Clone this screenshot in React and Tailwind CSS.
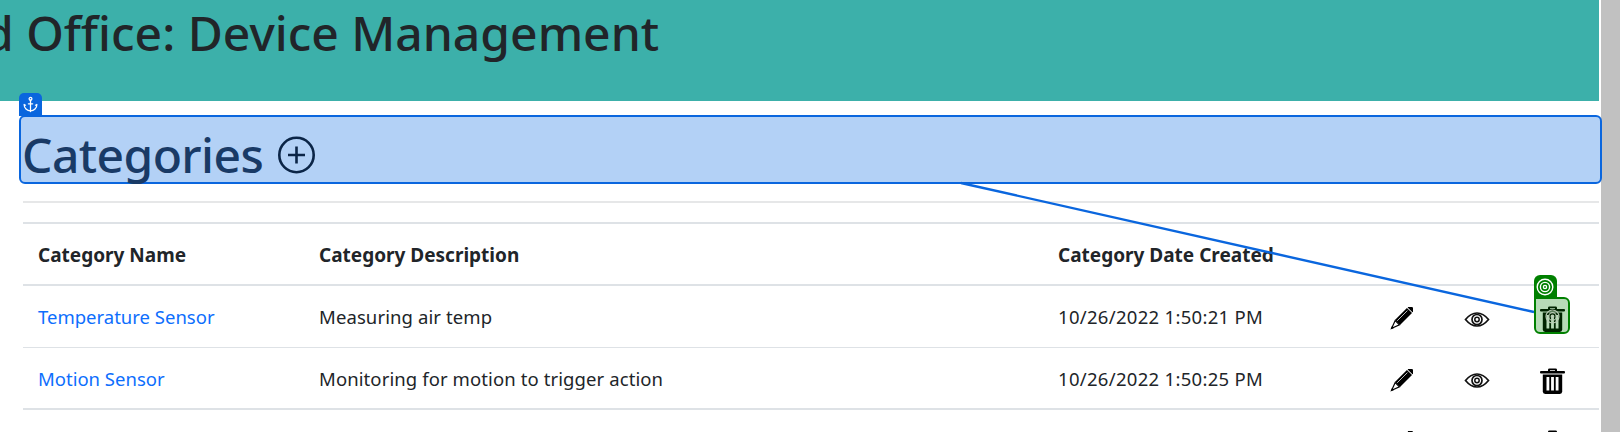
import React from "react";
import { Anchor } from "lucide-react";

const font = "font-['Noto_Sans','Open_Sans',sans-serif]";

const rows = [
  { name: "Temperature Sensor", desc: "Measuring air temp", date: "10/26/2022 1:50:21 PM", linked: true },
  { name: "Motion Sensor", desc: "Monitoring for motion to trigger action", date: "10/26/2022 1:50:25 PM", thick: true },
  { name: "", desc: "", date: "" },
];

function PencilIcon() {
  return (
    <svg width="24" height="24" viewBox="0 0 24 24" fill="#000">
      <g transform="rotate(45 12 12)">
        <rect x="8.4" y="-4.4" width="7.2" height="3.6" rx="0.9" />
        <rect x="8.4" y="0" width="7.2" height="17" />
        <path d="M10.6 1.5v14.5" stroke="#fff" strokeWidth="0.7" />
        <path d="M9 17.2h6l-3 8z" fill="#fff" stroke="#000" strokeWidth="1.2" />
        <path d="M12 26.6l-1.5-3.4h3z" />
      </g>
    </svg>
  );
}

function EyeIcon() {
  return (
    <svg width="26" height="15" viewBox="0 0 25 15" fill="none" stroke="#111" strokeWidth="1.7">
      <path d="M1 7.5C5 2.6 8.8 1 12.5 1S20 2.6 24 7.5C20 12.4 16.2 14 12.5 14S5 12.4 1 7.5z" />
      <circle cx="12.5" cy="7.5" r="5" />
      <circle cx="12.5" cy="7.5" r="2.2" strokeWidth="1.5" />
    </svg>
  );
}

function TrashIcon() {
  return (
    <svg width="25" height="26" viewBox="0 0 25 26" fill="#000">
      <path d="M8 3.4V1.8Q8 .4 9.5 .4h6q1.5 0 1.5 1.4v1.6h-2V2.2h-5v1.2z" />
      <rect x="0" y="3" width="25" height="2.4" rx="1" />
      <path d="M2.8 6.6h19.4V23.6q0 2.4-2.4 2.4H5.2q-2.4 0-2.4-2.4z" />
      <path d="M6.5 9h2.8v13.6H6.5zM11.1 9h2.8v13.6h-2.8zM15.7 9h2.8v13.6h-2.8z" fill="#fff" />
    </svg>
  );
}

function TargetIcon({ size = 18, color = "#fff" }) {
  return (
    <svg width={size} height={size} viewBox="0 0 18 18" fill="none" stroke={color} strokeWidth="1.4">
      <circle cx="9" cy="9" r="7.8" />
      <circle cx="9" cy="9" r="4.6" />
      <circle cx="9" cy="9" r="1.6" />
    </svg>
  );
}

function PlusCircle() {
  return (
    <svg width="37" height="38" viewBox="0 0 37 38" fill="none" stroke="#0b2547" strokeWidth="2.6">
      <circle cx="18.5" cy="19" r="17.2" />
      <path d="M18.5 10.5v17M10 19h17" />
    </svg>
  );
}

function Row({ row }) {
  return (
    <tr className={row.thick ? "border-b-2 border-[#dee2e6]" : "border-b border-[#dee2e6]"}>
      <td className="h-[62px] pl-[15px] pt-[2px] align-middle text-[#0d6efd]">{row.name}</td>
      <td className="pl-[15px] pt-[2px] align-middle tracking-[0.1px]">{row.desc}</td>
      <td className="pl-[15px] pt-[2px] align-middle tracking-[0.3px]">{row.date}</td>
      <td className="pt-[6px] align-middle">
        <div className="flex justify-center">
          <PencilIcon />
        </div>
      </td>
      <td className="pt-[6px] align-middle">
        <div className="flex justify-center">
          <EyeIcon />
        </div>
      </td>
      <td className="pr-[10px] pt-[6px] align-middle">
        <div className="flex justify-center">
          <div className="relative h-[26px] w-[25px]">
            <TrashIcon />
            {row.linked && (
              <div className="absolute left-[-6px] top-[-9px] h-[37px] w-[36px] rounded-[6px] rounded-tl-none border-2 border-[#008000] bg-[#00800048]">
                <div className="absolute left-[-2px] top-[-24px] flex h-[24px] w-[23px] items-center justify-center rounded-t-[6px] bg-[#008000]">
                  <TargetIcon />
                </div>
                <div className="absolute left-[9px] top-[10px]">
                  <TargetIcon size={15} color="#b9c9b5" />
                </div>
              </div>
            )}
          </div>
        </div>
      </td>
    </tr>
  );
}

export default function App() {
  return (
    <div className={`relative h-[432px] w-[1620px] overflow-hidden bg-white text-[#212529] ${font}`}>
      {/* browser scrollbar */}
      <div className="absolute bottom-0 right-0 top-0 w-[19px] bg-[#c1c1c1]" />

      <div className="relative mr-[21px] h-[101px] overflow-hidden bg-[#3cb0aa]">
        <h1 className="ml-[-16px] whitespace-nowrap pt-[4px] text-[48px] font-medium leading-[58px]">d Office: Device Management</h1>
      </div>

      <div className="relative mr-[18px] pl-[19px] pt-[14px]">
        <div className="relative h-[69px] rounded-[6px] border-2 border-[#0a66de] bg-[#b3d1f6]">
          <div className="absolute left-[-2px] top-[-24px] flex h-[23px] w-[23px] items-center justify-center rounded-t-[5px] bg-[#0a66de]">
            <Anchor size={17} color="#fff" strokeWidth={1.8} />
          </div>
          <h2 className="flex items-center gap-[15px] pl-[1px] text-[48px] font-medium leading-[76px] tracking-[-0.6px] text-[#193a66]">
            Categories
            <PlusCircle />
          </h2>
        </div>
      </div>

      <div className="relative mr-[21px] pl-[23px]">
        <hr className="mt-[17px] border-t-2 border-[#e6e7e8]" />
        <table className="mt-[19px] w-full table-fixed border-t-2 border-[#dee2e6] text-[18.5px]">
          <colgroup>
            <col className="w-[281px]" />
            <col className="w-[739px]" />
            <col className="w-[320px]" />
            <col className="w-[76px]" />
            <col className="w-[76px]" />
            <col className="w-[84px]" />
          </colgroup>
          <thead>
            <tr className="border-b-2 border-[#dee2e6]">
              <th className="h-[62px] pl-[15px] pt-[2px] text-left text-[19px] font-bold">Category Name</th>
              <th className="pl-[15px] pt-[2px] text-left text-[19px] font-bold">Category Description</th>
              <th className="pl-[15px] pt-[2px] text-left text-[19px] font-bold" colSpan={4}>Category Date Created</th>
            </tr>
          </thead>
          <tbody>
            {rows.map((row, i) => (
              <Row key={i} row={row} />
            ))}
          </tbody>
        </table>
      </div>

      {/* connector between the anchor box and the target */}
      <svg className="absolute left-0 top-0" width="1620" height="432" fill="none">
        <line x1="961" y1="183" x2="1534" y2="312" stroke="#0a66de" strokeWidth="2.4" />
      </svg>
    </div>
  );
}
